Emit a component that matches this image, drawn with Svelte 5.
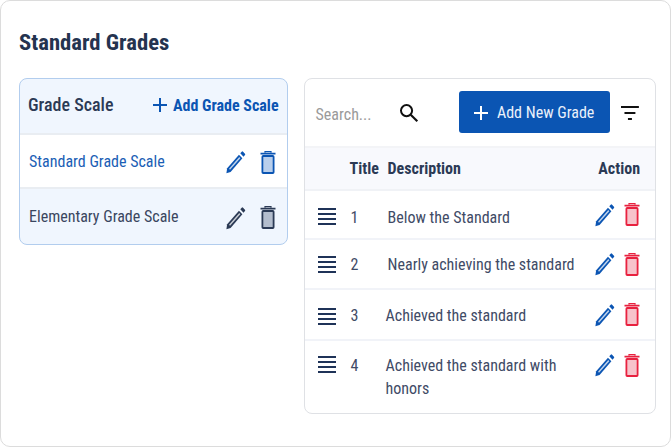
<script>
    const scales = [
        { name: 'Standard Grade Scale', active: true },
        { name: 'Elementary Grade Scale', active: false }
    ];

    const grades = [
        { id: 1, text: 'Below the Standard', h: 49, cls: 'low' },
        { id: 2, text: 'Nearly achieving the standard', h: 50, cls: '' },
        { id: 3, text: 'Achieved the standard', h: 51, cls: 'shift mid' },
        { id: 4, text: 'Achieved the standard with honors', h: 72, cls: 'shift tall' }
    ];
</script>

{#snippet pencil(color)}
    <svg class="pencil" width="20" height="24" viewBox="1 0 21 23" preserveAspectRatio="none" fill="none">
        <path d="M2.2 17.6 14.6 4.6l3.6 3.4L5.8 21l-4.4 1.4z" fill={color} />
        <path d="M4.2 18 15 6.8l1 1L5.2 19z" fill="#fff" opacity="0.75" />
        <path d="M16 3.2l1.5-1.6a1 1 0 0 1 1.4 0l2 1.9a1 1 0 0 1 0 1.4l-1.5 1.6z" fill={color} />
    </svg>
{/snippet}

{#snippet trash(color, fill)}
    <svg class="trash" width="16" height="23" viewBox="0 0 16 23" fill="none">
        <path d="M0.5 2.6h15" stroke={color} stroke-width="1.8" />
        <path d="M5 1.8V0.6h6v1.2" stroke={color} stroke-width="1.2" />
        <rect x="2.4" y="5" width="11.2" height="17" rx="0.8" fill={fill} stroke={color} stroke-width="1.8" />
    </svg>
{/snippet}

{#snippet plus(color, size)}
    <svg width={size} height={size} viewBox="0 0 16 16">
        <path d="M8 1v14M1 8h14" stroke={color} stroke-width="2" />
    </svg>
{/snippet}

<div class="page">
    <h1>Standard Grades</h1>
    <div class="columns">
        <section class="scale-card">
            <div class="scale-head">
                <span class="scale-title">Grade Scale</span>
                <span class="scale-add">
                    {@render plus('#0b55b3', 16)}
                    Add Grade Scale
                </span>
            </div>
            {#each scales as s}
                <div class="scale-row" class:active={s.active}>
                    <span class="scale-name">{s.name}</span>
                    {@render pencil(s.active ? '#0b55b3' : '#2b3a55')}
                    {#if s.active}
                        {@render trash('#0b55b3', '#b9cfec')}
                    {:else}
                        {@render trash('#2b3a55', '#b3bdcd')}
                    {/if}
                </div>
            {/each}
        </section>

        <section class="grade-card">
            <div class="toolbar">
                <span class="search">Search...</span>
                <svg class="search-icon" width="20" height="20" viewBox="0 0 20 20" fill="none">
                    <circle cx="7.6" cy="7.6" r="5.6" stroke="#111" stroke-width="2" />
                    <path d="M11.8 11.8 18.4 18.4" stroke="#111" stroke-width="2.2" />
                </svg>
                <button>
                    {@render plus('#fff', 16)}
                    Add New Grade
                </button>
                <svg class="filter" width="20" height="16" viewBox="0 0 20 16">
                    <path d="M1 2h18M4.5 8h11M8 14h4" stroke="#111" stroke-width="2" />
                </svg>
            </div>
            <div class="thead">
                <span class="col-title">Title</span>
                <span class="col-desc">Description</span>
                <span class="col-action">Action</span>
            </div>
            {#each grades as g}
                <div class="grade-row {g.cls}" style="height: {g.h}px">
                    <svg class="drag" width="20" height="18" viewBox="0 0 20 18">
                        <path d="M1 2h18M1 7h18M1 12h18M1 17h18" stroke="#1f3358" stroke-width="1.8" />
                    </svg>
                    <span class="num">{g.id}</span>
                    <span class="desc">{g.text}</span>
                    <span class="actions">
                        {@render pencil('#0b55b3')}
                        {@render trash('#e8213f', '#f7c3cb')}
                    </span>
                </div>
            {/each}
        </section>
    </div>
</div>

<style>
    :global(body) {
        background: #fff;
    }

    .page {
        box-sizing: border-box;
        width: 671px;
        height: 447px;
        padding: 29px 14px 0 18px;
        border: 1px solid #dcdcdc;
        border-radius: 10px;
        font-family: Roboto, "Noto Sans", sans-serif;
        font-stretch: 87%;
        color: #2b3a55;
    }

    h1 {
        margin: 0 0 23px;
        font-size: 22.7px;
        line-height: 25px;
        font-weight: 700;
        color: #24334f;
    }

    .columns {
        display: flex;
        align-items: flex-start;
        gap: 16px;
    }

    .scale-card {
        box-sizing: border-box;
        width: 269px;
        height: 167px;
        border: 1px solid #b2cdee;
        border-radius: 8px;
        background: #f0f6fe;
        overflow: hidden;
    }

    .scale-head {
        display: flex;
        align-items: center;
        justify-content: space-between;
        height: 56px;
        padding: 0 8px 4px 8px;
        box-sizing: border-box;
        border-bottom: 2px solid #e9edf2;
    }

    .scale-title {
        font-size: 18px;
        font-weight: 500;
        color: #2b3a55;
    }

    .scale-add {
        display: flex;
        align-items: center;
        gap: 5px;
        margin-top: 2px;
        font-size: 16px;
        font-weight: 700;
        color: #0b55b3;
    }

    .scale-row {
        display: flex;
        align-items: center;
        box-sizing: border-box;
        height: 55px;
        padding: 0 11px 0 9px;
        font-size: 16px;
        color: #3a4660;
    }

    .scale-row.active {
        background: #fff;
        border-bottom: 2px solid #e9edf2;
        color: #1a5eb5;
        height: 54px;
    }

    .scale-name {
        flex: 1;
    }

    .scale-row .pencil {
        margin: 2px 14px 0 0;
    }

    .scale-row .trash {
        margin-top: 2px;
    }

    .grade-card {
        box-sizing: border-box;
        width: 353px;
        height: 336px;
        border: 1px solid #dfe1e5;
        border-radius: 8px;
        background: #fff;
        overflow: hidden;
    }

    .toolbar {
        display: flex;
        align-items: center;
        height: 67px;
        padding: 0 15px 0 11px;
        box-sizing: border-box;
    }

    .search {
        width: 84px;
        margin-top: 3px;
        font-size: 16px;
        color: #9a9a9a;
    }

    .search-icon {
        margin-right: 40px;
    }

    button {
        display: flex;
        align-items: center;
        gap: 8px;
        width: 152px;
        height: 42px;
        margin: 0 10px 2px 0;
        padding: 2px 0 0 14px;
        border: 0;
        border-radius: 3px;
        background: #0b55b3;
        color: #eaf1fb;
        font-family: inherit;
        font-stretch: inherit;
        font-size: 16px;
    }

    .thead {
        display: flex;
        align-items: center;
        box-sizing: border-box;
        height: 45px;
        background: #f8f9fd;
        border-top: 2px solid #f3f4f7;
        border-bottom: 2px solid #f0f2f6;
        font-size: 16px;
        font-weight: 700;
        color: #2b3a55;
    }

    .col-title {
        margin-left: 45px;
        width: 38px;
    }

    .col-desc {
        flex: 1;
    }

    .col-action {
        margin-right: 15px;
    }

    .grade-row {
        display: flex;
        align-items: center;
        box-sizing: border-box;
        padding: 0 15px 0 12px;
        border-bottom: 2px solid #f1f3f8;
        font-size: 16px;
        line-height: 23px;
        color: #3f4b66;
    }

    .grade-row:last-child {
        border-bottom: 0;
    }

    .grade-row.low .num,
    .grade-row.low .desc {
        margin-top: 6px;
    }

    .grade-row.low .drag,
    .grade-row.mid .drag {
        margin-top: 3px;
    }

    .grade-row.mid .desc,
    .grade-row.mid .num {
        margin-top: 2px;
    }

    .grade-row.tall {
        align-items: flex-start;
        padding-top: 13px;
    }

    .grade-row.tall .drag {
        margin-top: 1px;
    }

    .num {
        width: 37px;
        margin-left: 14px;
    }

    .desc {
        width: 200px;
    }

    .grade-row.shift .desc {
        margin-left: -2px;
        margin-right: 2px;
    }

    .actions {
        display: flex;
        align-items: center;
        gap: 9px;
        margin-left: auto;
    }

    .grade-row.tall .actions {
        margin-top: -1px;
    }
</style>
